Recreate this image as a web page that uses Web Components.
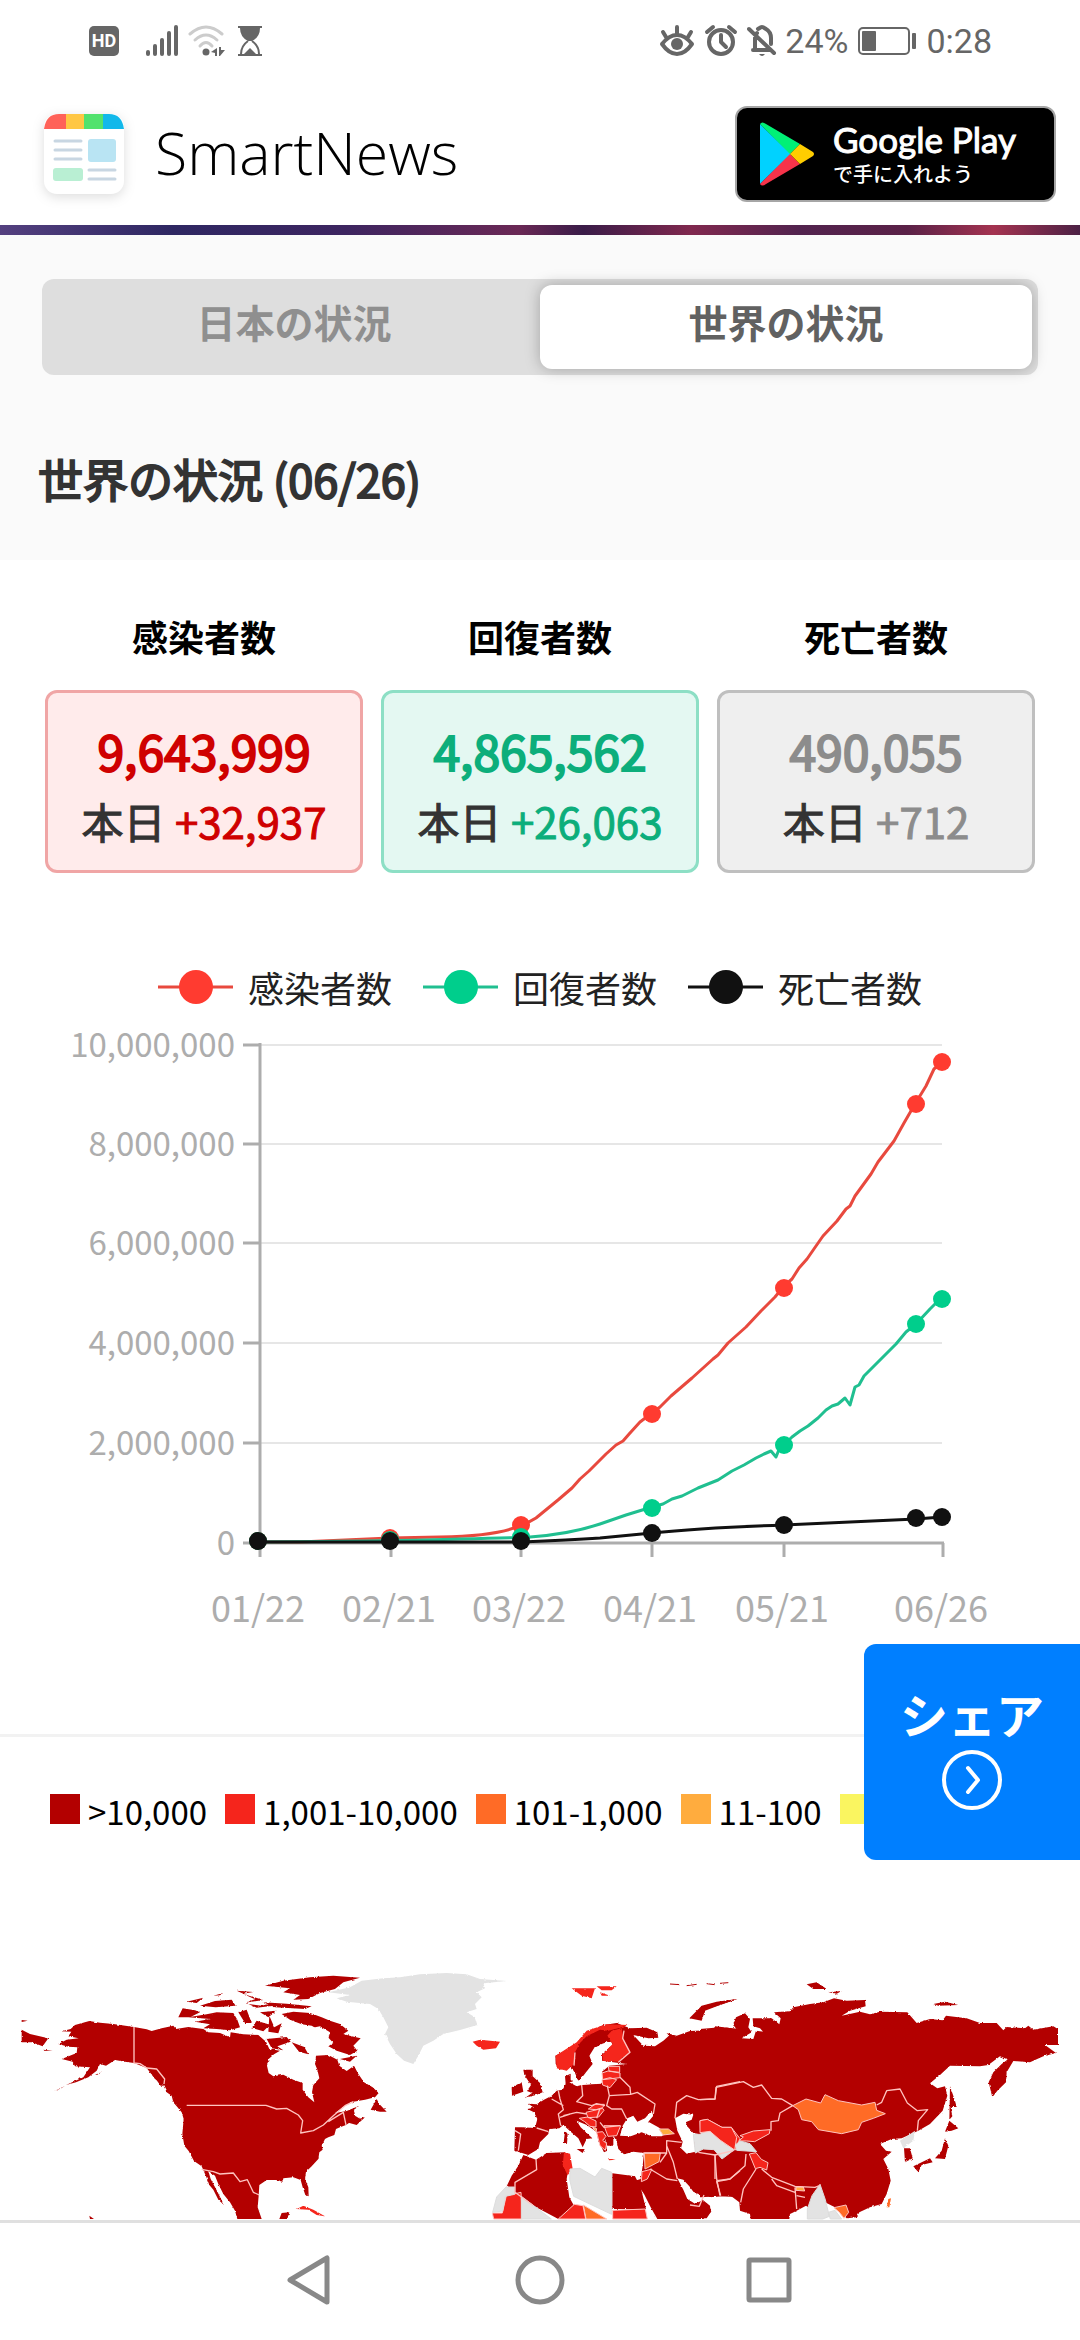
<!DOCTYPE html>
<html lang="ja">
<head>
<meta charset="utf-8">
<meta name="viewport" content="width=device-width, initial-scale=1">
<title>SmartNews 世界の状況</title>
<style>
  body {
    margin: 0;
    background: #fff;
    color: #000;
    font-family: "Noto Sans CJK JP", "Liberation Sans", sans-serif;
  }
</style>
</head>
<body>
<covid-page></covid-page>

<template id="status-bar">
  <style>
    :host {
      display: flex;
      justify-content: space-between;
      align-items: center;
      height: 82px;
      padding: 0 88px;
      color: #666;
      font: 34px/40px Roboto, sans-serif;
    }
    div { display: flex; align-items: center; }
    .left { gap: 8px; }
    .right { gap: 8px; }
    .hd { margin-right: 18px; }
    svg { display: block; fill: currentColor; }
    .line { fill: none; stroke: currentColor; stroke-width: 4; stroke-linecap: round; stroke-linejoin: round; }
    .hd text { fill: #fff; font: 700 18px Roboto, sans-serif; }
  </style>
  <div class="left">
    <svg class="hd" width="32" height="32" viewBox="0 0 32 32"><rect x="1" y="1" width="30" height="30" rx="5"/><text x="16" y="22" text-anchor="middle">HD</text></svg>
    <svg width="34" height="32" viewBox="0 0 34 32">
      <rect x="0" y="25" width="4" height="6" rx="2"/><rect x="7" y="19" width="4" height="12" rx="2"/><rect x="14" y="13" width="4" height="18" rx="2"/><rect x="21" y="6" width="4" height="25" rx="2"/><rect x="28" y="0" width="4" height="31" rx="2"/>
    </svg>
    <svg width="42" height="32" viewBox="0 0 42 32">
      <g fill="none" stroke="#ccc" stroke-width="3" stroke-linecap="round"><path d="M2 9Q18-5 34 9"/><path d="M7 15Q18 5 29 15"/><path d="M12 21Q18 14 24 21"/></g>
      <circle cx="18" cy="27" r="3.5"/><path d="M29 23v8h-2v-3l-4-1zM31 22v9h1l5-6h-4v-3z"/>
    </svg>
    <svg width="24" height="32" viewBox="0 0 24 32">
      <path d="M0 1h24v2H0zM0 29h24v2H0zM2 3h20q0 9-8 13h-4Q2 12 2 3z"/>
      <path d="M10 16Q3 21 3 29M14 16q7 5 7 13" fill="none" stroke="currentColor" stroke-width="2"/><path d="M6 29l6-6 6 6z"/>
    </svg>
  </div>
  <div class="right">
    <svg width="36" height="34" viewBox="0 0 36 34">
      <path class="line" d="M3 20Q10 11 18 11T33 20Q26 30 18 30T3 20zM18 3v7M4 8l3 5M32 8l-3 5"/><circle cx="18" cy="20" r="6"/>
    </svg>
    <svg width="36" height="34" viewBox="0 0 36 34">
      <circle class="line" cx="18" cy="18" r="12"/><path class="line" d="M18 11v7l5 5M4 8l6-5M32 8l-6-5"/>
    </svg>
    <svg width="30" height="34" viewBox="1 0 30 34">
      <path class="line" d="M7 26h17M9 25V14q0-3 2-5M12 5q3-2 4-2t4 2q5 3 5 9v6M3 5l25 24"/><path d="M13 30h6q-3 4-6 0z"/>
    </svg>
    <span>24%</span>
    <svg width="62" height="30" viewBox="0 0 62 30">
      <rect x="3" y="2" width="50" height="26" rx="4" fill="none" stroke="currentColor" stroke-width="2"/><rect x="6" y="5" width="14" height="20" rx="1"/><rect x="56" y="7" width="4" height="16" rx="1"/>
    </svg>
    <span>0:28</span>
  </div>
</template>

<template id="play-badge">
  <style>
    :host { display: block; }
    a {
      display: flex;
      align-items: center;
      gap: 18px;
      box-sizing: border-box;
      width: 321px;
      height: 96px;
      padding: 0 22px;
      background: #000;
      border: 2px solid #a6a6a6;
      border-radius: 12px;
      color: #fff;
      text-decoration: none;
    }
    span { display: block; }
    .store { font: 400 35px/40px Lato, sans-serif; -webkit-text-stroke: 1px #fff; }
    .get { font-size: 20px; line-height: 30px; font-weight: 500; }
  </style>
  <a href="#">
    <svg width="56" height="64" viewBox="0 0 56 64">
      <path fill="#00d2ff" d="M1 2v60l31-30z"/><path fill="#00f076" d="M1 2Q3-1 7 2l34 20-10 10z"/>
      <path fill="#f7334a" d="M1 62q2 3 6 0l34-20-10-10z"/><path fill="#ffcd00" d="M41 22l13 8q2 2 0 4l-13 8-10-10z"/>
    </svg>
    <span><span class="store">Google Play</span><span class="get">で手に入れよう</span></span>
  </a>
</template>

<template id="site-header">
  <style>
    :host { display: block; }
    header {
      display: flex;
      align-items: center;
      height: 143px;
      padding: 0 24px 0 44px;
    }
    svg { overflow: visible; filter: drop-shadow(0 3px 6px #0002); }
    h1 {
      flex: 1;
      margin: 0 0 3px 31px;
      font: 300 59px/80px "Open Sans", "Noto Sans", sans-serif;
    }
    .hero {
      height: 10px;
      background: linear-gradient(90deg, #54407f, #2e2762 16%, #3d2560 32%, #6a2855 48%, #3a1c48 54%, #80284e 64%, #52234e 74%, #5a2147 84%, #a43350 92%, #4c2145);
    }
  </style>
  <header>
    <svg width="80" height="80" viewBox="0 0 80 80">
      <rect width="80" height="80" rx="13" fill="#fff"/>
      <path fill="#ff6259" d="M0 15Q2 0 15 0h7v15z"/><path fill="#ffc744" d="M22 0h18v15H22z"/><path fill="#52e26d" d="M40 0h19v15H40z"/><path fill="#12b8ea" d="M59 0h6q13 0 15 15H59z"/>
      <path d="M11 27h26M11 36h26M11 45h26M45 56h26M45 65h26" stroke="#c8d6e2" stroke-width="3" stroke-linecap="round"/>
      <rect x="44" y="25" width="28" height="23" rx="3" fill="#b9e4f3"/><rect x="9" y="54" width="30" height="13" rx="3" fill="#b9efd3"/>
    </svg>
    <h1>SmartNews</h1>
    <play-badge></play-badge>
  </header>
  <div class="hero"></div>
</template>

<template id="region-tabs">
  <style>
    :host { display: block; padding: 44px 42px 0; }
    div {
      display: grid;
      grid-template-columns: 1fr 1fr;
      box-sizing: border-box;
      height: 96px;
      padding: 6px;
      background: #dedede;
      border-radius: 12px;
    }
    button {
      border: 0;
      border-radius: 12px;
      padding: 0 0 12px;
      background: none;
      color: #8f8f8f;
      font: 700 39px/57px "Noto Sans CJK JP", sans-serif;
    }
    button[aria-selected=true] {
      background: #fff;
      color: #616161;
      box-shadow: 0 0 15px #0004;
    }
  </style>
  <div role="tablist">
    <button role="tab" aria-selected="false">日本の状況</button>
    <button role="tab" aria-selected="true">世界の状況</button>
  </div>
</template>

<template id="stat-card">
  <style>
    :host { display: block; text-align: center; }
    h3 { margin: 0 0 27px; font-size: 36px; line-height: 54px; }
    .box {
      padding: 24px 0 11px;
      border: 3px solid var(--edge);
      border-radius: 12px;
      background: var(--fill);
      color: var(--ink);
    }
    p { margin: 0; }
    .total { font-size: 48px; line-height: 66px; -webkit-text-stroke: 2px; }
    .today { font-size: 42px; line-height: 76px; -webkit-text-stroke: 1px; }
    .today span { color: #333; }
  </style>
  <h3><slot name="label"></slot></h3>
  <div class="box">
    <p class="total"><slot name="total"></slot></p>
    <p class="today"><span>本日</span> <slot name="today"></slot></p>
  </div>
</template>

<template id="line-chart">
  <style>
    :host { display: block; }
    ul {
      display: flex;
      justify-content: center;
      gap: 31px;
      margin: 0;
      padding: 0;
      list-style: none;
      color: #222;
      font-size: 36px;
      line-height: 52px;
    }
    li { display: flex; align-items: center; gap: 15px; }
    svg { display: block; }
    .plot { width: 100%; height: auto; }
    text { fill: #adadad; font-size: 33px; }
    .x text { font-size: 36px; text-anchor: middle; }
    .y text { text-anchor: end; }
    .grid { stroke: #e6e6e6; stroke-width: 2; }
    .axis { stroke: #adadad; stroke-width: 3; fill: none; }
    .series { fill: none; stroke-width: 3; stroke-linejoin: round; }
  </style>
  <ul></ul>
  <svg class="plot" viewBox="0 1013 1080 637" role="img" aria-label="感染者数の推移"></svg>
</template>

<template id="map-legend">
  <style>
    :host {
      display: flex;
      gap: 18px;
      padding: 50px 0 0 50px;
      white-space: nowrap;
      font-size: 33px;
      line-height: 48px;
      border-top: 3px solid #f2f2f2;
    }
    span { display: flex; gap: 8px; }
    i { width: 30px; height: 30px; margin-top: 7px; background: var(--c); }
  </style>
  <span><i style="--c:#b30000"></i>&gt;10,000</span>
  <span><i style="--c:#f5251c"></i>1,001-10,000</span>
  <span><i style="--c:#ff6b26"></i>101-1,000</span>
  <span><i style="--c:#ffac3e"></i>11-100</span>
  <span><i style="--c:#faf560"></i></span>
</template>

<template id="world-map">
  <style>
    :host { display: block; overflow: hidden; position: relative; }
    svg { position: absolute; left: 0; top: 0; width: 100%; }
    .d { fill: #b30000; }
    .r { fill: #f5251c; }
    .o { fill: #ff6b26; }
    .a { fill: #ffac3e; }
    .g { fill: #e3e3e3; }
    .w { fill: #fff; }
    .c { stroke: #ffc4c0; stroke-width: 3; stroke-linejoin: round; }
    .b { fill: none; stroke: #ffc4c0; stroke-width: 4; stroke-linejoin: round; }
  </style>
  <svg viewBox="0 0 3240 900" role="img" aria-label="世界の感染状況の地図">
    <defs>
      <filter id="coast" x="0" y="0" width="100%" height="100%">
        <feTurbulence type="fractalNoise" baseFrequency=".12" numOctaves="3" seed="4" result="n"/>
        <feDisplacementMap in="SourceGraphic" in2="n" scale="7" xChannelSelector="R" yChannelSelector="G"/>
      </filter>
    </defs>
    <g filter="url(#coast)">
      <!-- Greenland -->
      <path class="g" d="M985 130L1050 115 1085 95 1150 88 1200 85 1260 76 1340 72 1400 76 1440 90 1520 96 1450 103 1455 118 1430 130 1445 145 1425 165 1430 180 1400 190 1425 205 1432 228 1380 243 1330 255 1300 275 1270 290 1255 320 1240 345 1212 335 1190 315 1170 285 1155 255 1165 235 1150 205 1135 180 1110 165 1040 158 1010 148 1050 138z"/>
      <!-- North America -->
      <g>
        <path class="d" d="M185 247L212 240 225 228 268 216 300 221 340 225 402 234 440 241 455 246 485 238 520 230 528 240 565 234 610 240 625 250 660 252 690 265 692 250 730 256 775 258 798 278 808 300 840 305 822 316 806 330 801 350 806 372 820 382 850 377 880 392 908 402 908 422 925 445 943 460 936 430 940 408 958 388 952 362 945 345 948 320 985 318 1012 332 1018 350 1040 366 1062 350 1075 375 1092 400 1118 415 1136 432 1125 445 1095 452 1060 458 1035 470 1005 492 1040 486 1078 470 1062 482 1065 500 1085 512 1050 520 1038 528 1020 535 1008 540 1003 558 985 565 975 570 965 590 968 602 958 610 955 630 935 652 918 668 915 690 925 715 926 742 916 738 908 715 902 693 880 685 850 688 848 698 828 693 800 693 778 708 776 740 773 775 785 810 712 810 705 785 690 760 670 735 655 705 645 680 625 666 632 690 648 720 662 748 672 768 655 752 640 722 628 708 618 682 605 652 582 636 566 606 553 590 547 555 551 510 545 490 520 460 515 440 500 430 488 405 465 390 440 357 402 342 375 338 345 333 318 350 300 345 290 365 265 385 228 400 198 408 250 385 270 355 225 352 218 338 185 330 230 312 232 295 205 293 175 285 200 272 236 268 205 262 214 248z"/>
        <path class="d" d="M65 242L90 255 145 268 128 292 95 280 65 280zM65 213l18 2-18 4zM130 302l28 4-24 0zM165 425l30-14-14 8zM85 440l40-6-30 5zM285 378l18-8-12 8zM535 205L548 178 585 184 600 190 570 205zM565 205L620 196 650 190 700 192 712 212 720 235 690 244 650 240 610 238 630 226 585 218 630 210zM560 158l50-12-20 16zM640 140l30-8-10 7zM600 170l45-14 50-4 12 18-60 5zM710 125l50 4-30 5zM730 135l60 18-55 8 30-10zM715 190l25-8 15 40-20 0zM745 165l40 5 30-8 5 8-50 6zM790 160l70 4 75 8-20 8-90-5zM795 110L850 95 930 85 1000 80 1080 86 1030 100 1005 120 960 132 925 150 880 152 900 138 850 130 870 118zM780 190l50-5-25 20zM770 215l40 12-20 20-35-10zM808 200l15 35 22-12-10 30-30-5zM845 195L880 188 930 192 965 205 990 215 1020 225 1045 245 1030 255 1055 262 1082 268 1060 290 1072 305 1050 318 1010 305 985 292 1000 282 970 250 935 230 905 226 870 212zM800 270l60-6 12 14-40 14 18 12-35-6zM875 280l38 14 12 22-28-8zM1020 330l50-10-20 18zM1112 482L1130 450 1138 465 1160 488 1140 488zM1040 520L1095 505 1070 528z"/>
        <path class="r" d="M890 780L910 770 940 782 975 802 950 798 925 782z"/>
        <path class="d" d="M838 810L845 792 868 790 862 810zM240 780l6 4M268 800l14 10h-12zM440 355l35 20 20 25-12 12-25-35zM515 455l40 20 8 14-20-8z"/>
        <path class="w" d="M920 240l40-8 30 18-8 30-40 8-25-18z"/>
      </g>
      <!-- Europe, Middle East and Africa -->
      <g transform="translate(1200)">
        <path class="d" d="M345 535L365 535 405 537 412 510 402 490 382 480 402 476 385 464 410 466 432 452 455 440 470 425 488 422 497 405 495 382 512 374 512 392 530 408 605 404 560 372 535 396 525 372 512 352 480 362 467 345 466 320 505 300 538 280 560 250 610 228 650 222 690 238 740 236 772 250 775 266 745 268 700 258 730 290 765 292 790 275 805 262 800 252 830 260 870 246 940 243 945 232 1020 240 1020 745 960 742 930 745 915 735 905 750 930 770 932 790 910 810 772 810 752 775 732 735 705 695 722 690 728 650 732 612 700 608 672 616 655 600 650 576 640 560 640 590 622 590 612 560 622 605 612 610 595 575 590 548 560 528 530 515 542 535 577 568 560 570 548 595 535 568 512 548 490 528 478 538 448 540 445 555 420 580 415 600 385 618 366 612 343 605z"/>
        <path class="d" d="M370 362l28 0 0 20 22 20 8 28-20 8-32 8 20-14-15-6 12-18-20-30zM335 415l30-15 5 28-34 12zM495 545l8 10-2 30-10-4zM530 600l24 0-6 12zM868 208L905 170 950 158 1012 150 960 168 915 185 905 215zM1000 222l20-22v30zM370 618L408 632 440 612 495 610 505 660 500 690 508 745 522 770 475 810 400 770 345 730 320 712 335 680 355 650zM637 673L705 682 722 715 738 780 637 780z"/>
        <path class="w" d="M605 285L632 275 638 288 606 314 606 335 680 345 628 350 606 368 612 388 605 402 545 408 530 412 508 400 540 394 558 370 578 345 568 320 582 298z"/>
        <path class="w" d="M660 560L668 530 682 508 700 500 712 518 735 508 755 485 760 500 745 518 775 535 800 553 785 562 755 562 725 550 692 562zM825 508L850 494 880 497 875 512 860 518 858 528 880 552 895 555 883 580 886 608 860 614 843 598 848 578 832 545zM832 688L850 692 868 712 880 728 902 738 905 722 912 735 905 755 885 764 862 750 850 722z"/>
        <path class="r" d="M515 118L585 118 575 148 545 140zM590 112l60 0-15 12-30 0zM600 130l30 10-25 0zM218 278L240 272 300 278 288 298 250 302 230 290zM625 628l22 4-20 2zM492 610l18 4 8 45-15 20-15-30z"/>
        <path class="r" d="M467 320L530 280 560 245 620 226 685 228 660 236 625 245 600 242 560 262 540 282 525 310 522 345 500 365 470 358zM635 245L665 238 670 270 690 310 655 338 608 335 608 315 638 285 622 260z"/>
        <path class="d" d="M810 105l30 2M860 110l30-4M920 104l24 3M960 103l25-2" stroke="#b30000" stroke-width="3"/>
      </g>
      <!-- Russia and Asia -->
      <g transform="translate(2100)">
        <path class="d" d="M0 240L60 235 118 252 100 228 108 205 135 193 150 210 145 235 155 250 125 268 160 270 168 245 192 248 198 258 180 238 160 232 158 208 215 208 238 226 242 208 222 190 270 187 280 175 330 165 370 160 402 148 440 155 495 153 497 172 450 185 425 200 480 188 510 196 540 188 622 190 650 222 690 210 728 214 738 200 800 208 840 222 890 222 910 244 920 234 975 238 985 230 1000 242 1060 232 1074 240 1074 288 1035 288 1068 312 1030 322 990 340 940 336 920 370 918 400 892 425 877 445 866 400 880 370 905 345 945 315 925 332 900 322 865 348 840 352 750 350 720 378 690 403 712 418 735 412 742 440 728 485 690 525 655 545 605 568 575 570 540 585 558 605 575 608 550 630 565 660 572 695 560 735 545 765 510 775 478 790 470 805 440 808 405 775 375 760 360 710 345 790 318 770 290 785 270 795 268 810 152 810 150 795 120 785 118 760 92 740 0 745z"/>
        <path class="d" d="M750 412l14 40 6 22-18 0 5 28-9 10zM735 548L748 515 775 538 755 545zM735 568L745 590 735 630 705 628 725 605zM640 652L690 628 698 640 665 648 655 670zM612 598L630 598 638 628 615 640zM0 192L20 168 60 158 112 150 60 168 20 180zM320 106l30-6 30 20-40 0zM385 130l40-4-15 8zM700 165L735 158 775 168 715 170zM785 168l35 2M730 185l30 5M0 780L20 762 35 785 20 808 0 808zM1065 215l10 0z"/>
        <path class="g" d="M600 575L645 545 640 575 610 598z"/>
        <path class="o" d="M560 775L565 750 573 748 568 775z"/>
      </g>
    </g>
    <g class="c">
      <g transform="translate(1200)">
        <path class="r" d="M625 352l34 0 0 18-32-4zM606 372l18-6 36 6 0 14-52 6zM606 392l24-6 20 6-20 24-22-8zM565 480l20-14 28 0-5 10-20 6zM558 490l50-12 4 6-16 20-32 2zM538 508l25-4 25 12 0 18-18-2-16-14zM590 550l18-2 10 14-10 12 12 10-4 20-16-14zM612 530l50 0-12 30-26 2z"/>
        <path class="a" d="M578 535l12 4-2 10zM777 540l28 0 18 14-34 4z"/>
        <path class="o" d="M733 612l48 0-4 26-42 22zM550 768l70 42-62 0z"/>
        <path class="r" d="M900 515l22-4 44 24 28 0 26 34-12 34-44-26-34-32-28 6zM726 668l30-8-14 30-18 8zM277 792l30 0 12-52 44-10 4 80-86 0zM475 810l48-44 26 4 8 40zM638 784l98-4 6 30-104 0z"/>
        <path class="g" stroke="#ddd" d="M510 660l30-2 45 26 20-26 30 12 0 126-114-54-12-50zM318 714l26 0 0 22-28 6-8 44-30 4 12-46zM364 742l90 68-90 0zM880 556l20 0 24-14 36 14 16 30 30 14-40 30-24-28-32-2-24 12z"/>
      </g>
      <g transform="translate(2100)">
        <path class="o" d="M278 470L318 450 362 462 375 437 415 455 485 468 525 460 530 484 556 494 520 508 485 520 475 542 425 554 355 542 335 518 305 512 295 482z"/>
        <path class="r" d="M120 560l40-14 50-4-2 12-44 24-24-2-24 0 14-12zM0 515l22-4 44 24 28 0 16 30-6 38-44-30-30-26-30 4zM148 615l20-4 16 20 20 10-4 22-20-8-14 4z"/>
        <path class="a" d="M288 714l22 0 4 12-26-2z"/>
        <path class="g" stroke="#ddd" d="M106 588l14-12 30 8 20 24-60-4zM336 740l24-34 16 46 12 50-20 8-46 0 0-30zM385 790l20-6 20 26-34 0z"/>
        <path class="o" d="M402 776l36-8 8 22-14 18-14-18z"/>
      </g>
    </g>
    <g class="b">
      <path d="M402 234V342L420 344 440 357 470 360 494 390 492 405M560 469H798L830 480 860 478 895 498 908 515 902 552 940 545 970 528 1000 500 1035 470 1060 458M985 518L1030 490 1038 528M605 661L640 668 660 675 700 672 720 698 742 692 760 730 778 738"/>
      <g transform="translate(1200)">
        <path d="M672 245L668 268 690 310 655 340M545 408L548 440 530 458 575 470 590 464 615 470M622 410L628 440 692 436 690 415 660 385M628 440L620 470 635 480 665 480 680 510M692 436L712 430 765 465 760 495M475 425L480 450 490 482 475 495 482 530M455 450L490 470M490 500L530 490 560 495M480 505L510 495M590 508L600 478M600 520L612 535 660 530M525 310L522 350M410 537L445 548M345 545L362 555 355 605M825 508L830 460 860 440 895 452 945 450 950 412 1020 398M800 610L800 575 845 580M800 590L820 640 832 690M780 640L800 612 730 612M750 660L800 690 832 695M870 768L898 772 912 738M895 610L945 618 950 690 960 740M950 695L990 690 1020 665M408 630L410 662 345 700 345 730 400 770"/>
      </g>
      <g transform="translate(2100)">
        <path d="M0 452L45 450 48 415 130 398 160 415 185 408 215 448 245 450 278 470 240 492 235 515 213 518 213 545M530 468L545 460 560 425 600 420 622 462 652 485 683 482 655 515 652 545M138 615L135 650 118 665 90 690 50 698 62 740M45 690L45 618 100 605M168 660L130 720 122 760M185 660L215 685 285 712 345 715 362 708M215 690L230 710 285 730M285 715L290 780M290 740L315 745"/>
      </g>
    </g>
  </svg>
</template>

<template id="share-button">
  <style>
    :host { position: absolute; right: 0; top: 1644px; }
    button {
      display: flex;
      flex-direction: column;
      align-items: center;
      width: 216px;
      height: 216px;
      padding: 33px 0 0;
      border: 0;
      border-radius: 12px 0 0 12px;
      background: #007fff;
      color: #fff;
      font: 700 48px/72px "Noto Sans CJK JP", sans-serif;
    }
  </style>
  <button><slot></slot>
    <svg width="62" height="62" viewBox="0 0 62 62" fill="none" stroke="#fff" stroke-width="4" stroke-linecap="round" stroke-linejoin="round"><circle cx="31" cy="31" r="28"/><path d="M27 19l10 12-10 12"/></svg>
  </button>
</template>

<template id="nav-bar">
  <style>
    :host {
      display: flex;
      justify-content: center;
      gap: 170px;
      height: 117px;
      border-top: 3px solid #e0e0e0;
      background: #fff;
    }
    button { padding: 0 0 3px; border: 0; background: none; }
    svg { display: block; fill: none; stroke: #888; stroke-width: 5; stroke-linejoin: round; }
  </style>
  <button aria-label="戻る"><svg width="60" height="60" viewBox="0 0 60 60"><path d="M47 8v44L10 30z"/></svg></button>
  <button aria-label="ホーム"><svg width="60" height="60" viewBox="0 0 60 60"><circle cx="30" cy="30" r="22"/></svg></button>
  <button aria-label="履歴"><svg width="60" height="60" viewBox="0 0 60 60"><rect x="9" y="10" width="40" height="40" rx="1"/></svg></button>
</template>

<template id="covid-page">
  <style>
    :host { display: flex; flex-direction: column; position: relative; min-height: 100vh; }
    .top { background: #fafafa; }
    h2 {
      margin: 0;
      padding: 71px 38px 48px;
      color: #333;
      font-size: 45px;
      line-height: 66px;
      font-weight: 400;
      -webkit-text-stroke: 2px;
    }
    .stats {
      display: grid;
      grid-template-columns: repeat(3, 1fr);
      gap: 18px;
      padding: 49px 45px 88px;
    }
    .red { --edge: #f0a5a5; --fill: #ffebeb; --ink: #cf0000; }
    .green { --edge: #8ddfc5; --fill: #e4f8f2; --ink: #0cae7b; }
    .grey { --edge: #bfbfbf; --fill: #efefef; --ink: #8c8c8c; }
    line-chart { margin-bottom: 84px; }
    world-map { flex: 1; margin-top: 114px; }
  </style>
  <status-bar></status-bar>
  <site-header></site-header>
  <div class="top">
    <region-tabs></region-tabs>
    <h2>世界の状況 (06/26)</h2>
  </div>
  <div class="stats">
    <stat-card class="red"><span slot="label">感染者数</span><span slot="total">9,643,999</span><span slot="today">+32,937</span></stat-card>
    <stat-card class="green"><span slot="label">回復者数</span><span slot="total">4,865,562</span><span slot="today">+26,063</span></stat-card>
    <stat-card class="grey"><span slot="label">死亡者数</span><span slot="total">490,055</span><span slot="today">+712</span></stat-card>
  </div>
  <line-chart></line-chart>
  <map-legend></map-legend>
  <world-map></world-map>
  <nav-bar></nav-bar>
  <share-button>シェア</share-button>
</template>

<script>
class TemplateElement extends HTMLElement {
    constructor() {
        super();
        const template = document.getElementById(this.localName);
        this.attachShadow({ mode: 'open' }).append(template.content.cloneNode(true));
    }
}

const SERIES = [
    {
        name: '感染者数',
        color: '#ff3b30',
        line: '#e8493e',
        dots: [1541, 1538, 1525, 1414, 1288, 1104, 1062],
        path: 'M258 1542L300 1542Q345 1540 390 1538L440 1537Q500 1536 521 1525Q530 1522 536 1518L558 1500 572 1488 580 1479 589 1471 606 1454 616 1445 623 1441 630 1433 640 1422 652 1413 660 1407 671 1396 692 1378 713 1359 718 1355 728 1343 746 1327 761 1311 775 1297 784 1286 792 1279 799 1268 807 1259 816 1246 823 1236 837 1221 846 1209 850 1206 855 1196 871 1174 878 1162 894 1141 904 1123 915 1104 926 1086 934 1069 942 1062',
    },
    {
        name: '回復者数',
        color: '#00ce8c',
        line: '#20bf90',
        dots: [1541, 1540, 1537, 1508, 1445, 1324, 1299],
        path: 'M258 1542Q400 1541 460 1539Q510 1538 530 1537Q570 1534 600 1524L626 1515 652 1507 663 1504 672 1499 682 1496 698 1488 718 1480 732 1471 744 1465 756 1458 764 1454 771 1451 776 1457 780 1447 784 1445 792 1437 800 1431 808 1426 818 1418 826 1410 832 1406 838 1404 845 1398 850 1405 855 1387 859 1385 864 1376 874 1366 886 1354 896 1344 906 1332 916 1324 930 1309 942 1297',
    },
    {
        name: '死亡者数',
        color: '#111',
        line: '#111',
        dots: [1541, 1541, 1541, 1533, 1525, 1518, 1517],
        path: 'M258 1542L521 1542Q570 1540 600 1538L652 1533Q700 1528 784 1525L916 1519 942 1517',
    },
];

class LineChart extends TemplateElement {
    constructor() {
        super();
        const xs = [258, 390, 521, 652, 784, 916, 942];
        const ticks = [260, 391, 521, 652, 784, 943];
        const dates = ['01/22', '02/21', '03/22', '04/21', '05/21', '06/26'];
        const rows = [1045, 1144, 1243, 1343, 1443, 1543];
        const amounts = ['10,000,000', '8,000,000', '6,000,000', '4,000,000', '2,000,000', '0'];

        this.shadowRoot.querySelector('ul').innerHTML = SERIES.map((s) => `
      <li><svg width="75" height="36"><path d="M0 18H75" stroke="${s.line}" stroke-width="3"/><circle cx="38" cy="18" r="17" fill="${s.color}"/></svg>${s.name}</li>`).join('');

        this.shadowRoot.querySelector('.plot').innerHTML = `
      ${rows.slice(0, 5).map((y) => `<path class="grid" d="M260 ${y}H942"/>`).join('')}
      ${rows.map((y) => `<path class="axis" d="M243 ${y}h17"/>`).join('')}
      ${ticks.map((x) => `<path class="axis" d="M${x} 1543v14"/>`).join('')}
      <path class="axis" d="M260 1043V1543H944"/>
      <g class="y">${rows.map((y, i) => `<text x="235" y="${y + 12}">${amounts[i]}</text>`).join('')}</g>
      <g class="x">${ticks.map((x, i) => `<text x="${x - 2}" y="1622">${dates[i]}</text>`).join('')}</g>
      ${SERIES.map((s) => `<path class="series" stroke="${s.line}" d="${s.path}"/>`
        + xs.map((x, i) => `<circle cx="${x}" cy="${s.dots[i]}" r="9" fill="${s.color}"/>`).join('')).join('')}`;
    }
}

customElements.define('line-chart', LineChart);
['status-bar', 'play-badge', 'site-header', 'region-tabs', 'stat-card', 'map-legend',
    'world-map', 'share-button', 'nav-bar', 'covid-page'].forEach((name) => {
    customElements.define(name, class extends TemplateElement {});
});
</script>
</body>
</html>
